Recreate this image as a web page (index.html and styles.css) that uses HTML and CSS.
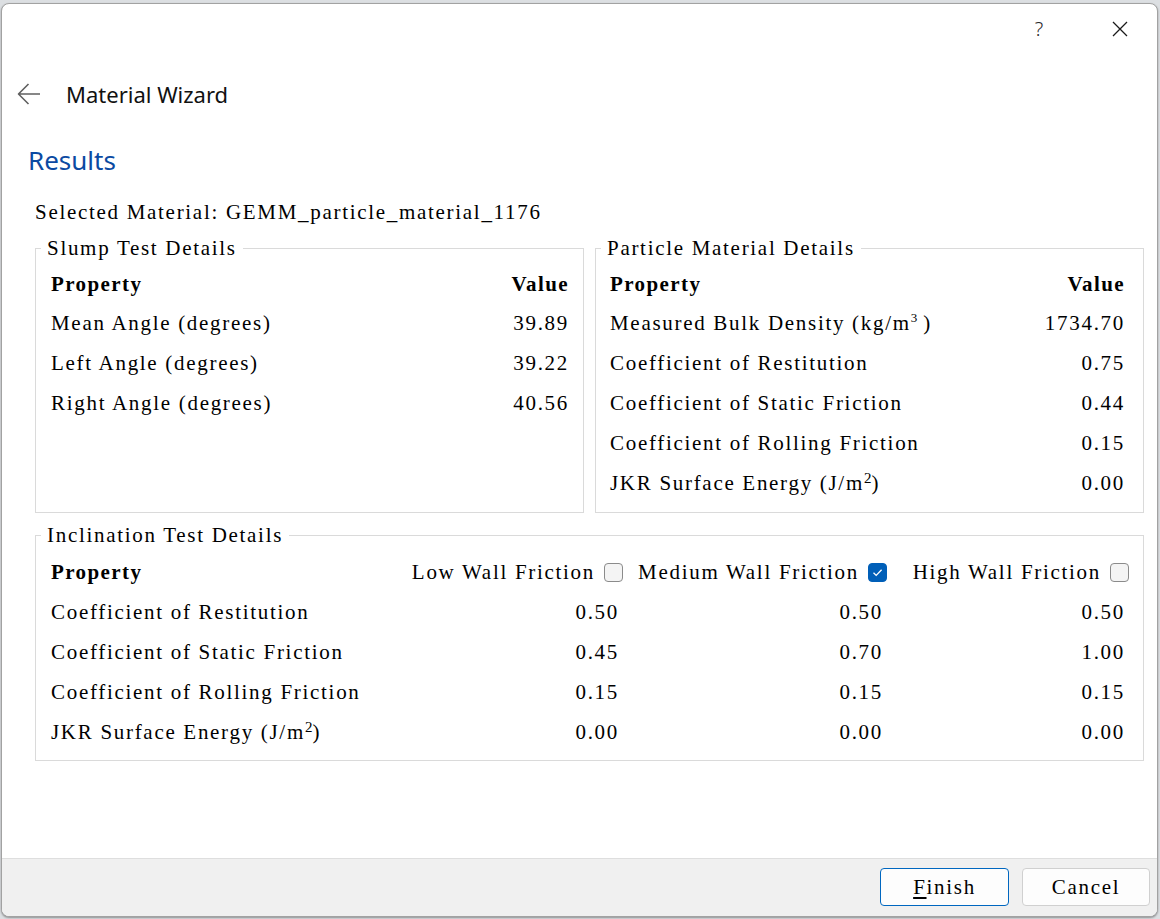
FILE: index.html
```html
<!DOCTYPE html>
<html>
<head>
<meta charset="utf-8">
<title>Material Wizard</title>
<link rel="stylesheet" href="styles.css">
</head>
<body>
<div class="window">
  <div class="titlebar">
    <span class="tb-btn help">?</span>
    <span class="tb-btn close">
      <svg width="16" height="16" viewBox="0 0 16 16"><path d="M1 1 L15 15 M15 1 L1 15" stroke="#1a1a1a" stroke-width="1.3" fill="none"/></svg>
    </span>
  </div>
  <div class="header">
    <svg class="back" width="24" height="24" viewBox="0 0 24 24"><path d="M23 12 H1.5 M11.5 2 L1.5 12 L11.5 22" stroke="#606060" stroke-width="1.6" fill="none" stroke-linejoin="round"/></svg>
    <span class="wizard-title">Material Wizard</span>
  </div>
  <div class="content">
    <h1 class="results">Results</h1>
    <div class="selected">Selected Material: GEMM_particle_material_1176</div>
    <div class="top-groups">
      <fieldset class="group slump">
        <legend>Slump Test Details</legend>
        <div class="kv">
          <div class="kv-head"><span class="b">Property</span><span class="b">Value</span></div>
          <div class="kv-row"><span>Mean Angle (degrees)</span><span>39.89</span></div>
          <div class="kv-row"><span>Left Angle (degrees)</span><span>39.22</span></div>
          <div class="kv-row"><span>Right Angle (degrees)</span><span>40.56</span></div>
        </div>
      </fieldset>
      <fieldset class="group particle">
        <legend>Particle Material Details</legend>
        <div class="kv">
          <div class="kv-head"><span class="b">Property</span><span class="b">Value</span></div>
          <div class="kv-row"><span>Measured Bulk Density (kg/m<sup class="sup3">3</sup>)</span><span>1734.70</span></div>
          <div class="kv-row"><span>Coefficient of Restitution</span><span>0.75</span></div>
          <div class="kv-row"><span>Coefficient of Static Friction</span><span>0.44</span></div>
          <div class="kv-row"><span>Coefficient of Rolling Friction</span><span>0.15</span></div>
          <div class="kv-row"><span>JKR Surface Energy (J/m<sup class="sup">2</sup>)</span><span>0.00</span></div>
        </div>
      </fieldset>
    </div>
    <fieldset class="group incl">
      <legend>Inclination Test Details</legend>
      <div class="grid">
        <div class="gh b">Property</div>
        <div class="gh opt"><span>Low Wall Friction</span><span class="cb"></span></div>
        <div class="gh opt"><span>Medium Wall Friction</span><span class="cb on"><svg width="19" height="19" viewBox="0 0 19 19"><path d="M5.5 9.8 L8.2 12.4 L13.6 6.8" stroke="#fff" stroke-width="1.3" fill="none"/></svg></span></div>
        <div class="gh opt"><span>High Wall Friction</span><span class="cb"></span></div>

        <div class="gc">Coefficient of Restitution</div>
        <div class="gc v">0.50</div><div class="gc v">0.50</div><div class="gc v">0.50</div>

        <div class="gc">Coefficient of Static Friction</div>
        <div class="gc v">0.45</div><div class="gc v">0.70</div><div class="gc v">1.00</div>

        <div class="gc">Coefficient of Rolling Friction</div>
        <div class="gc v">0.15</div><div class="gc v">0.15</div><div class="gc v">0.15</div>

        <div class="gc"><span>JKR Surface Energy (J/m<sup class="sup">2</sup>)</span></div>
        <div class="gc v">0.00</div><div class="gc v">0.00</div><div class="gc v">0.00</div>
      </div>
    </fieldset>
  </div>
  <div class="footer">
    <button class="btn primary"><u>F</u>inish</button>
    <button class="btn">Cancel</button>
  </div>
</div>
</body>
</html>
```
FILE: styles.css
```css
html, body {
  margin: 0;
  padding: 0;
}
body {
  background: #dcdfe2;
  width: 1160px;
  height: 919px;
  padding: 3px 2px 2px 1px;
  box-sizing: border-box;
  font-family: "Liberation Serif", "Noto Sans CJK SC", serif;
  font-size: 21px;
  letter-spacing: 1.7px;
  color: #000;
}
.window {
  height: 914px;
  box-sizing: border-box;
  background: #fff;
  border: 1px solid #a2a2a2;
  border-radius: 8px;
  box-shadow: 0 1px 2px rgba(0,0,0,0.35);
  display: flex;
  flex-direction: column;
  overflow: hidden;
}
.titlebar {
  height: 49px;
  flex: none;
  display: flex;
  justify-content: flex-end;
  align-items: center;
  gap: 35px;
  padding-right: 14px;
}
.tb-btn {
  width: 46px;
  height: 32px;
  display: flex;
  align-items: center;
  justify-content: center;
}
.help {
  font-family: "Noto Sans", sans-serif;
  font-size: 20px;
  letter-spacing: 0;
  color: #2a2a2a;
  font-weight: 300;
}
.header {
  margin-top: 21px;
  height: 40px;
  flex: none;
  display: flex;
  align-items: center;
  padding-left: 15px;
}
.back { flex: none; }
.wizard-title {
  margin-left: 25px;
  font-family: "Noto Sans", sans-serif;
  font-size: 22px;
  letter-spacing: 0;
  color: #111;
}
.content {
  flex: 1;
  padding: 0 13px 0 33px;
}
.results {
  margin: 28px 0 0 -7px;
  height: 36px;
  line-height: 36px;
  font-family: "Noto Sans", sans-serif;
  font-weight: 400;
  font-size: 26px;
  letter-spacing: 0;
  color: #0b4aa2;
}
.selected {
  margin-top: 22px;
  height: 24px;
  line-height: 24px;
  white-space: nowrap;
}
.top-groups {
  margin-top: 14px;
  display: flex;
  gap: 11px;
}
.group {
  margin: 0;
  padding: 0;
  min-width: 0;
  border: 1px solid #dadada;
}
.top-groups .group { flex: 1; }
.group legend {
  margin-left: 5px;
  padding: 0 6px 0 6px;
  height: 20px;
  line-height: 20px;
  white-space: nowrap;
}
.b { font-weight: 700; letter-spacing: 1.4px; }
.kv {
  padding: 7px 14px 9px 15px;
}
.particle .kv { padding: 7px 18px 9px 14px; }
.kv-head, .kv-row {
  display: flex;
  justify-content: space-between;
  align-items: center;
  white-space: nowrap;
}
.kv-head { height: 38px; }
.kv-row { height: 40px; }
.sup {
  font-size: 15px;
  letter-spacing: 0;
  vertical-align: 7px;
  line-height: 0;
}
.sup3 {
  font-size: 13px;
  letter-spacing: 0;
  vertical-align: 8px;
  line-height: 0;
  margin-right: 6px;
}
.incl { margin-top: 12px; }
.grid {
  display: grid;
  grid-template-columns: 1fr 216px 249px 227px;
  column-gap: 15px;
  padding: 7px 14px 8px 15px;
}
.gh, .gc {
  display: flex;
  align-items: center;
  white-space: nowrap;
}
.gh { height: 40px; }
.gc { height: 40px; }
.opt {
  justify-content: flex-end;
  gap: 9px;
}
.v {
  justify-content: flex-end;
  padding-right: 4px;
}
.cb {
  width: 19px;
  height: 19px;
  box-sizing: border-box;
  border: 1px solid #8b8b8b;
  border-radius: 4px;
  background: #f4f4f4;
  display: inline-block;
  flex: none;
}
.cb.on {
  background: #005fb8;
  border-color: #005fb8;
  position: relative;
}
.cb.on svg {
  position: absolute;
  left: -1px;
  top: -1px;
}
.footer {
  height: 58px;
  flex: none;
  box-sizing: border-box;
  border-top: 1px solid #dedede;
  background: #f0f0f0;
  display: flex;
  justify-content: flex-end;
  align-items: flex-start;
  gap: 13px;
  padding: 9px 7px 0 0;
}
.btn {
  width: 129px;
  height: 38px;
  box-sizing: border-box;
  border: 1px solid #d0d0d0;
  border-radius: 4px;
  background: #fdfdfd;
  font-family: "Liberation Serif", serif;
  font-size: 21px;
  letter-spacing: 1.7px;
  color: #000;
  padding: 0;
}
.btn + .btn { width: 128px; }
.btn.primary { border-color: #0067c0; }
.btn u { text-underline-offset: 3px; }
```
